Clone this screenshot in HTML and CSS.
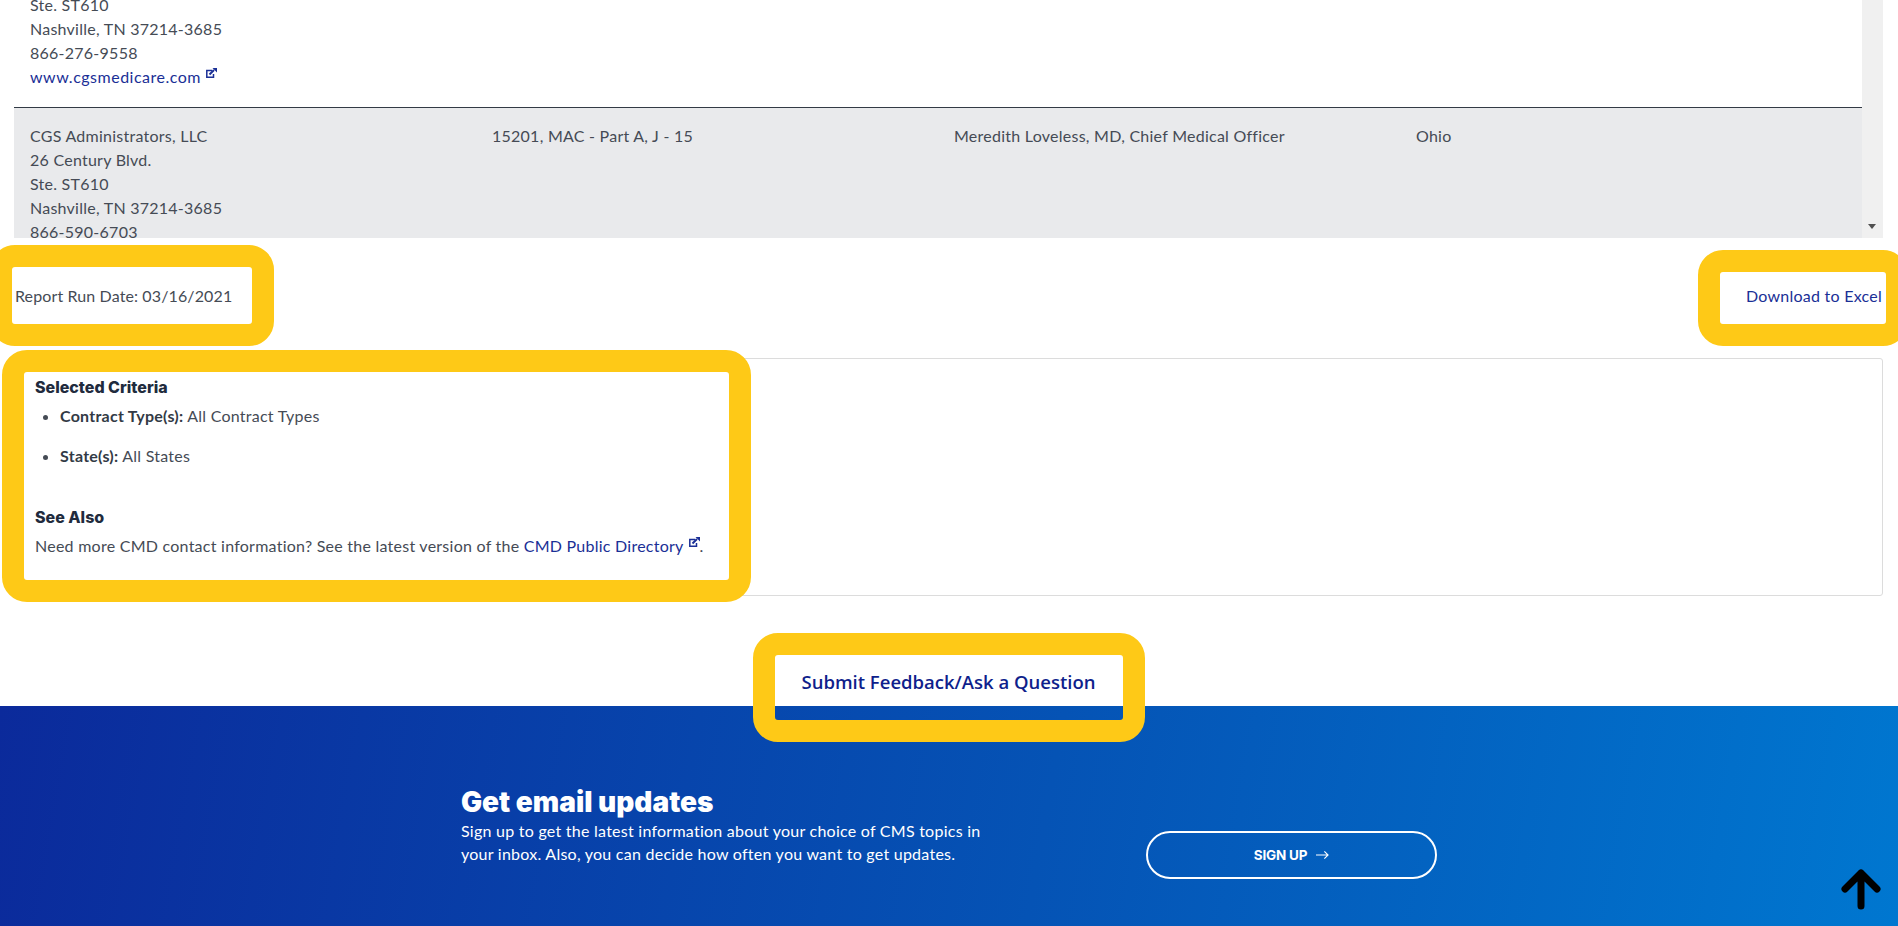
FILE: index.html
```html
<!DOCTYPE html>
<html lang="en">
<head>
    <meta charset="UTF-8">
    <meta name="viewport" content="width=device-width, initial-scale=1.0">
    <title>Contractor Directory Report</title>
    <link rel="stylesheet" href="styles.css">
</head>
<body>
    <div class="page">
        <div class="results">
            <div class="results-scroll">
                <table class="results-table">
                    <tbody>
                        <tr>
                            <td>
                                Ste. ST610<br>
                                Nashville, TN 37214-3685<br>
                                866-276-9558<br>
                                <a href="#">www.cgsmedicare.com<svg class="ext-icon" viewBox="0 0 11 10"><path class="ext-box" d="M6 2.500H.8v6.700h6.700V6"/><path class="ext-arrow" d="M3.500 6.500L8 2"/><path class="ext-head" d="M6.500 0H11v4.500z"/></svg></a>
                            </td>
                            <td></td>
                            <td></td>
                            <td></td>
                        </tr>
                        <tr class="shaded">
                            <td>
                                CGS Administrators, LLC<br>
                                26 Century Blvd.<br>
                                Ste. ST610<br>
                                Nashville, TN 37214-3685<br>
                                866-590-6703
                            </td>
                            <td>15201, MAC - Part A, J - 15</td>
                            <td>Meredith Loveless, MD, Chief Medical Officer</td>
                            <td>Ohio</td>
                        </tr>
                    </tbody>
                </table>
            </div>
            <div class="scrollbar"><span class="scroll-arrow"></span></div>
        </div>

        <div class="report-row">
            <div class="run-date focus">Report Run Date: 03/16/2021</div>
            <a class="download focus" href="#">Download to Excel</a>
        </div>

        <div class="panel">
            <div class="criteria focus">
                <h3>Selected Criteria</h3>
                <ul>
                    <li><b>Contract Type(s):</b> All Contract Types</li>
                    <li><b>State(s):</b> All States</li>
                </ul>
                <h3 class="see-also">See Also</h3>
                <p>Need more CMD contact information? See the latest version of the <a href="#">CMD Public Directory<svg class="ext-icon" viewBox="0 0 11 10"><path class="ext-box" d="M6 2.500H.8v6.700h6.700V6"/><path class="ext-arrow" d="M3.500 6.500L8 2"/><path class="ext-head" d="M6.500 0H11v4.500z"/></svg></a>.</p>
            </div>
        </div>

        <div class="feedback-row">
            <a class="feedback focus" href="#">Submit Feedback/Ask a Question</a>
        </div>
    </div>

    <footer class="signup-band">
        <div class="signup-text">
            <h2>Get email updates</h2>
            <p>Sign up to get the latest information about your choice of CMS topics in your inbox. Also, you can decide how often you want to get updates.</p>
        </div>
        <a class="signup-btn" href="#">SIGN UP
            <svg class="signup-arrow" viewBox="0 0 14 10"><path d="M0 5h13M9 1l4 4-4 4"/></svg>
        </a>
        <a class="back-top" href="#" aria-label="Back to top">
            <svg viewBox="0 0 42 42"><path d="M21 38V5M5 21L21 5l16 16"/></svg>
        </a>
    </footer>
</body>
</html>
```

FILE: styles.css
```css
* {
    box-sizing: border-box;
}

html,
body {
    height: 926px;
    overflow: hidden;
}

body {
    margin: 0;
    font-family: "Lato", "Noto Sans", Arial, sans-serif;
    font-size: 16px;
    line-height: 24px;
    letter-spacing: 0.25px;
    color: #454b55;
    background-color: #fff;
}

a {
    color: #1a2f96;
    text-decoration: none;
}

.page {
    padding: 0 12px;
}

.focus {
    position: relative;
}

.focus::before {
    content: "";
    position: absolute;
    top: -22px;
    right: -22px;
    bottom: -22px;
    left: -22px;
    border: 22px solid #fec917;
    border-radius: 25px;
    pointer-events: none;
}

/* Results table, scrolled part way */
.results {
    display: flex;
    height: 238px;
    margin: 0 3px 0 2px;
    overflow: hidden;
}

.results-scroll {
    flex: 1;
    min-width: 0;
}

.results-table {
    width: 100%;
    margin-top: -7px;
    border-collapse: collapse;
    table-layout: fixed;
}

.results-table td {
    padding: 16px 16px 18px;
    vertical-align: top;
}

.results-table tr:first-child td {
    padding-top: 0;
}

.results-table a {
    letter-spacing: 0.5px;
}

.results-table .shaded td {
    background-color: #e9eaec;
    border-top: 1px solid #323a45;
}

.scrollbar {
    position: relative;
    width: 21px;
    background-color: #f0f0f0;
}

.scroll-arrow {
    position: absolute;
    left: 6px;
    bottom: 9px;
    border-left: 4.500px solid transparent;
    border-right: 4.500px solid transparent;
    border-top: 5px solid #505050;
}

.ext-icon {
    width: 11px;
    height: 10px;
    margin-left: 5px;
    vertical-align: 5px;
}

.ext-box,
.ext-arrow {
    fill: none;
    stroke: #1a2f96;
    stroke-width: 1.500;
}

.ext-arrow {
    stroke-width: 2;
}

.ext-head {
    fill: #1a2f96;
}

/* Run date and download */
.report-row {
    display: flex;
    justify-content: space-between;
    align-items: flex-end;
    margin-top: 29px;
}

.run-date {
    width: 240px;
    height: 57px;
    padding: 17px 0 0 3px;
    letter-spacing: 0.12px;
    background-color: #fff;
}

.download {
    width: 166px;
    height: 52px;
    padding: 12px 0 0 26px;
    background-color: #fff;
    white-space: nowrap;
}

/* Criteria */
.panel {
    height: 238px;
    margin: 34px 3px 0 2px;
    padding: 13px 0 0 9px;
    background-color: #fff;
    border: 1px solid #dcdcdc;
    border-radius: 3px;
}

.criteria {
    width: 705px;
    height: 208px;
    padding: 4px 0 0 11px;
    background-color: #fff;
}

.criteria h3 {
    margin: 0;
    font-family: "Inter", "Lato", sans-serif;
    font-size: 16px;
    line-height: 22px;
    font-weight: 800;
    letter-spacing: 0;
    color: #212b3d;
}

.criteria ul {
    margin: 6px 0 0;
    padding-left: 25px;
}

.criteria li {
    margin-bottom: 16px;
}

.criteria b {
    color: #323a45;
}

.criteria .see-also {
    margin-top: 38px;
}

.criteria p {
    margin: 6px 0 0;
}

/* Feedback button sits half over the blue band */
.feedback-row {
    display: flex;
    justify-content: center;
    height: 110px;
    padding: 59px 1px 0 0;
}

.feedback {
    z-index: 1;
    width: 348px;
    height: 65px;
    padding-top: 12px;
    font-family: "Open Sans", "Lato", sans-serif;
    font-size: 18.500px;
    line-height: 30px;
    font-weight: 600;
    letter-spacing: 0;
    text-align: center;
    color: #0f1f8c;
}

.signup-band {
    position: relative;
    display: flex;
    height: 220px;
    padding: 80px 0 0 461px;
    color: #fff;
    background: linear-gradient(100deg, #0b2a9b 0%, #0553b5 55%, #0077d0 100%);
}

.signup-text {
    width: 685px;
}

.signup-text h2 {
    margin: 0;
    font-family: "Inter", "Lato", sans-serif;
    font-size: 28px;
    line-height: 32px;
    font-weight: 900;
    letter-spacing: 0;
}

.signup-text p {
    width: 545px;
    margin: 1px 0 0;
    line-height: 23px;
}

.signup-btn {
    display: flex;
    justify-content: center;
    align-items: center;
    gap: 9px;
    width: 291px;
    height: 48px;
    margin-top: 45px;
    border: 2px solid #fff;
    border-radius: 24px;
    font-family: "Inter", "Lato", sans-serif;
    font-size: 13.500px;
    font-weight: 700;
    letter-spacing: -0.2px;
    color: #fff;
}

.signup-arrow {
    width: 13px;
    height: 10px;
    fill: none;
    stroke: #fff;
    stroke-width: 1.200;
}

.back-top {
    position: absolute;
    right: 16px;
    top: 162px;
    width: 42px;
    height: 42px;
}

.back-top svg {
    display: block;
    fill: none;
    stroke: #000;
    stroke-width: 7;
    stroke-linecap: round;
    stroke-linejoin: round;
}
```
